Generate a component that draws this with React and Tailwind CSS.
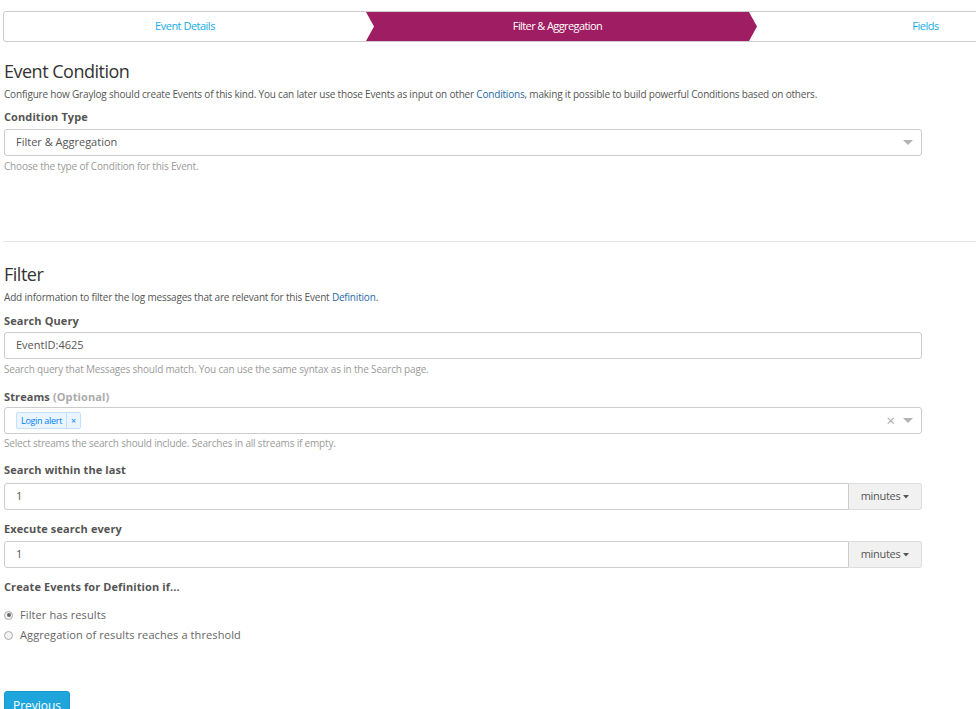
import React from 'react';

const font = { fontFamily: '"Open Sans", "Noto Sans", sans-serif' };

const Caret = () => (
  <svg width="10" height="6" viewBox="0 0 10 6" className="shrink-0">
    <path d="M0 0 L10 0 L5 5 Z" fill="#b3b3b3" />
  </svg>
);

const Steps = () => (
  <div className="h-[31px] w-[1100px] ml-[3px] mt-[11px] flex border border-[#ccc] rounded-l-[3px] text-[11px] tracking-[-0.5px]">
    <div className="w-[362px] flex items-center justify-center text-[#16ace3]">Event Details</div>
    <div className="relative w-[383px] bg-[#9f1d62] flex items-center justify-center text-white tracking-[-0.6px]">
      <div className="absolute left-0 top-0 h-full w-[8px] bg-white [clip-path:polygon(0_0,100%_50%,0_100%)]" />
      Filter &amp; Aggregation
      <div className="absolute right-[-8px] top-0 h-full w-[8px] bg-[#9f1d62] [clip-path:polygon(0_0,100%_50%,0_100%)] z-10" />
    </div>
    <div className="flex-1 flex items-center justify-center text-[#16ace3]">Fields</div>
  </div>
);

const Label = ({ children }) => (
  <div className="text-[11px] font-bold text-[#555] tracking-[0.1px] leading-[15px]">{children}</div>
);

const Help = ({ children }) => (
  <div className="text-[10px] text-[#9a9a9a] tracking-[-0.18px] leading-[14px]">{children}</div>
);

const Input = ({ value }) => (
  <div className="h-[27px] border border-[#ccc] rounded-[3px] flex items-center px-[11px] text-[11px] text-[#555]">
    {value}
  </div>
);

const InputGroup = ({ value }) => (
  <div className="flex h-[27px] w-[918px]">
    <div className="flex-1 border border-[#ccc] rounded-l-[3px] flex items-center px-[11px] text-[11px] text-[#555]">{value}</div>
    <div className="w-[73px] border border-l-0 border-[#ddd] bg-[#f1f1f1] rounded-r-[3px] flex items-center justify-center gap-[3px] text-[11px] text-[#555] tracking-[-0.3px]">
      minutes
      <svg width="6" height="4" viewBox="0 0 6 4"><path d="M0 0 L6 0 L3 3.5 Z" fill="#555" /></svg>
    </div>
  </div>
);

const Radio = ({ checked, children }) => (
  <div className="flex items-center gap-[7px] text-[11px] text-[#666] leading-[20px] tracking-[0.1px]">
    <span className="w-[9px] h-[9px] rounded-full border border-[#aaa] bg-[#f3f3f3] flex items-center justify-center">
      {checked && <span className="w-[4px] h-[4px] rounded-full bg-[#666]" />}
    </span>
    {children}
  </div>
);

export default function App() {
  return (
    <div style={font} className="w-[976px] h-[709px] overflow-hidden bg-white">
      <Steps />

      <div className="px-[4px]">
        <h2 className="text-[18px] text-[#333] mt-[17px] leading-[24px] tracking-[-0.5px]">Event Condition</h2>
        <p className="text-[10px] text-[#555] mt-[4px] leading-[15px] tracking-[-0.19px]">
          Configure how Graylog should create Events of this kind. You can later use those Events as input on other{' '}
          <span className="text-[#1f6aa5]">Conditions</span>, making it possible to build powerful Conditions based on others.
        </p>
        <div className="mt-[7px]"><Label>Condition Type</Label></div>
        <div className="mt-[5px] w-[918px] h-[27px] border border-[#ccc] rounded-[3px] flex items-center justify-between pl-[11px] pr-[8px] text-[11px] text-[#555]">
          <span>Filter &amp; Aggregation</span>
          <Caret />
        </div>
        <div className="mt-[3px]"><Help>Choose the type of Condition for this Event.</Help></div>
      </div>

      <div className="ml-[3px] mt-[68px] border-t border-[#e5e5e5]" />

      <div className="px-[4px]">
        <h2 className="text-[18px] text-[#333] mt-[20px] leading-[24px] tracking-[-0.5px]">Filter</h2>
        <p className="text-[10px] text-[#555] mt-[4px] leading-[15px] tracking-[-0.19px]">
          Add information to filter the log messages that are relevant for this Event <span className="text-[#1f6aa5]">Definition</span>.
        </p>

        <div className="mt-[8px]"><Label>Search Query</Label></div>
        <div className="mt-[4px] w-[918px]"><Input value="EventID:4625" /></div>
        <div className="mt-[3px]"><Help>Search query that Messages should match. You can use the same syntax as in the Search page.</Help></div>

        <div className="mt-[13px]"><Label>Streams <span className="text-[#aaa]">(Optional)</span></Label></div>
        <div className="mt-[3px] w-[918px] h-[27px] border border-[#ccc] rounded-[3px] flex items-center pl-[11px] pr-[8px]">
          <span className="flex h-[17px] border border-[#c2e0ff] bg-[#ebf5ff] rounded-[2px] text-[9px] text-[#007eff] tracking-[-0.3px]">
            <span className="px-[4px] flex items-center">Login alert</span>
            <span className="px-[4px] flex items-center border-l border-[#c2e0ff]">×</span>
          </span>
          <span className="ml-auto text-[15px] text-[#aaa] leading-none mr-[8px]">×</span>
          <Caret />
        </div>
        <div className="mt-[2px]"><Help>Select streams the search should include. Searches in all streams if empty.</Help></div>

        <div className="mt-[12px]"><Label>Search within the last</Label></div>
        <div className="mt-[6px]"><InputGroup value="1" /></div>

        <div className="mt-[11px]"><Label>Execute search every</Label></div>
        <div className="mt-[5px]"><InputGroup value="1" /></div>

        <div className="mt-[11px]"><Label>Create Events for Definition if...</Label></div>
        <div className="mt-[11px]">
          <Radio checked>Filter has results</Radio>
          <Radio>Aggregation of results reaches a threshold</Radio>
        </div>

        <button className="mt-[46px] h-[30px] w-[66px] bg-[#1ea6dc] border border-[#1897c9] rounded-[3px] text-white text-[12px] flex items-start justify-center pt-[5px]">
          Previous
        </button>
      </div>
    </div>
  );
}
